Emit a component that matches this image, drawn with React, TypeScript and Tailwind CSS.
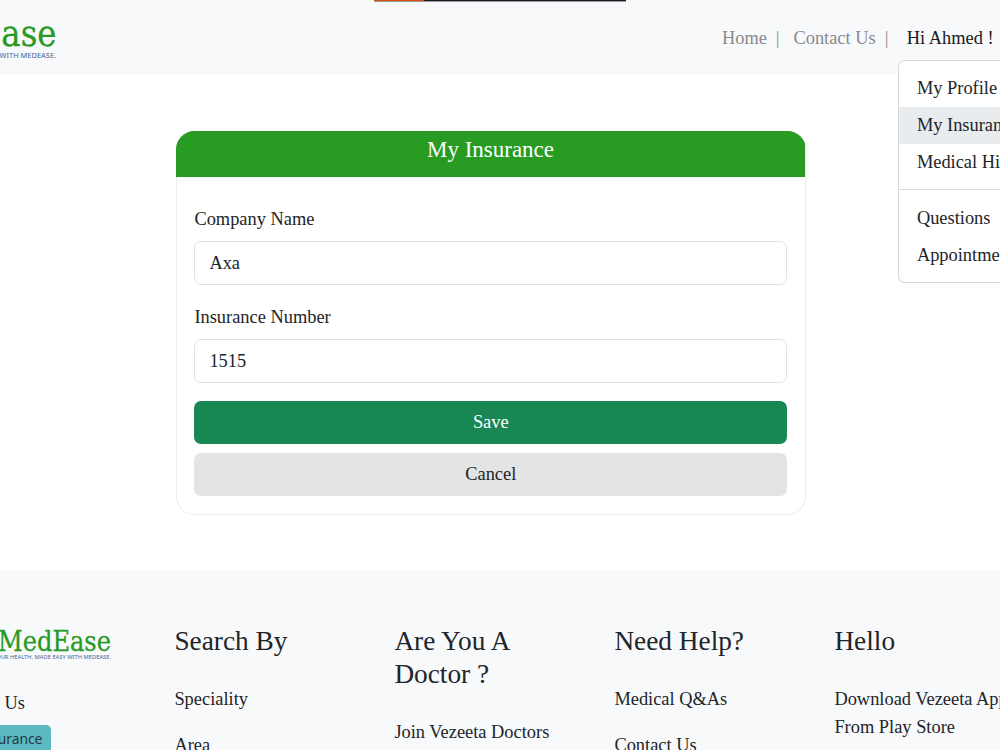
import React from "react";

const linkGroups = [
  { title: "Search By", links: ["Speciality", "Area"] },
  { title: "Are You A Doctor ?", links: ["Join Vezeeta Doctors"] },
  { title: "Need Help?", links: ["Medical Q&As", "Contact Us"] },
];

function Field({ label, value }: { label: string; value: string }) {
  return (
    <label className="mb-[18px] block">
      <span className="mb-[8px] block leading-[28px]">{label}</span>
      <input
        type="text"
        defaultValue={value}
        className="block h-[44px] w-full rounded-[7px] border border-[#dee2e6] bg-white px-[14px] pt-px outline-none"
      />
    </label>
  );
}

function MenuItem({ text, active = false }: { text: string; active?: boolean }) {
  return (
    <a className={`block pb-[3.9px] pl-[17.9px] pt-[5.3px] ${active ? "bg-[#e9ecef]" : ""}`}>{text}</a>
  );
}

function Header() {
  return (
    <header className="relative flex h-[75px] bg-[#f8f9fa]">
      <div className="absolute left-[374px] top-0 flex h-[2px] w-[252px] border-b border-[#9b989c] bg-[#1d1c20]">
        <div className="h-px w-[50px] bg-[#d4500c]" />
      </div>
      <svg width="60" height="75" className="shrink-0" role="img" aria-label="MedEase">
        <text x="56.5" y="46" textAnchor="end" fontFamily="DejaVu Serif, serif" fontSize="37" textLength="152" lengthAdjust="spacingAndGlyphs" fill="#289a24" stroke="#289a24" strokeWidth="0.3">MedEase</text>
        <text x="56" y="57.8" textAnchor="end" fontFamily="Noto Sans, sans-serif" fontSize="7.3" textLength="152" lengthAdjust="spacingAndGlyphs" fill="#42619a">YOUR HEALTH, MADE EASY WITH MEDEASE.</text>
      </svg>
      <nav className="ml-auto flex items-center pr-[6.4px] pt-[2px] text-[#888a8c]">
        <a>Home</a>
        <span className="ml-[9px]">|</span>
        <a className="ml-[13.9px]">Contact Us</a>
        <span className="ml-[9px]">|</span>
        <a className="ml-[18.4px] text-[#17191c]">Hi Ahmed !</a>
      </nav>
      <div className="absolute left-[898px] top-[60.4px] z-10 w-[102px] overflow-hidden whitespace-nowrap rounded-l-[7px] border border-r-0 border-[#d5d7d9] bg-white py-[8.6px] text-[#212529]">
        <MenuItem text="My Profile" />
        <MenuItem text="My Insurance" active />
        <MenuItem text="Medical History" />
        <hr className="mb-[9.6px] mt-[8.8px] border-t border-[#dcdddf]" />
        <MenuItem text="Questions" />
        <MenuItem text="Appointments" />
      </div>
    </header>
  );
}

function InsuranceForm() {
  return (
    <main className="h-[495px] pt-[56px]">
      <section className="ml-[176px] h-[384px] w-[629.5px] overflow-hidden rounded-[18.4px] shadow-[inset_0_0_0_1px_#ececec]">
        <h1 className="mr-[0.5px] h-[46px] bg-[#289b23] pt-[5px] text-center text-[23px] leading-[27.6px] text-white">My Insurance</h1>
        <form className="px-[18.4px] pt-[28px]">
          <Field label="Company Name" value="Axa" />
          <Field label="Insurance Number" value="1515" />
          <button type="button" className="block h-[43px] w-full rounded-[7px] bg-[#198754] text-white">Save</button>
          <button type="button" className="mt-[9.2px] block h-[42.4px] w-full rounded-[7px] bg-[#e4e4e4] pt-px">Cancel</button>
        </form>
      </section>
    </main>
  );
}

function Footer() {
  return (
    <footer className="flex h-[180px] overflow-hidden bg-[#f8f9fa] pt-[54px]">
      <div className="w-[174.4px] shrink-0">
        <svg width="120" height="41" className="block" role="img" aria-label="MedEase">
          <text x="111" y="26.5" textAnchor="end" fontFamily="DejaVu Serif, serif" fontSize="28" textLength="113" lengthAdjust="spacingAndGlyphs" fill="#289a24" stroke="#289a24" strokeWidth="0.3">MedEase</text>
          <text x="111" y="35" textAnchor="end" fontFamily="Noto Sans, sans-serif" fontSize="5.6" textLength="118" lengthAdjust="spacingAndGlyphs" fill="#42619a">YOUR HEALTH, MADE EASY WITH MEDEASE.</text>
        </svg>
        <div className="mt-[25px] flex w-[25px] justify-end whitespace-nowrap">
          <a>About Us</a>
        </div>
        <div className="mt-[7.5px] flex w-[51.4px] justify-end">
          <button type="button" className="h-[40px] shrink-0 whitespace-nowrap rounded-[5px] bg-[#5bb9c1] px-[9px] pb-[14px] font-['Noto_Sans',sans-serif] text-[13.8px] text-[#23383f]">Insurance</button>
        </div>
      </div>
      {linkGroups.map((group) => (
        <div key={group.title} className="w-[220px] shrink-0 pr-[40px] pt-px">
          <h2 className="mb-[27.6px] text-[27.3px] leading-[33px]">{group.title}</h2>
          {group.links.map((link) => (
            <a key={link} className="mb-[18.4px] block">{link}</a>
          ))}
        </div>
      ))}
      <div className="w-[190px] shrink-0 pt-px">
        <h2 className="mb-[27px] text-[27.3px] leading-[33px]">Hello</h2>
        <p className="leading-[28px]">Download Vezeeta App From Play Store</p>
      </div>
    </footer>
  );
}

export default function App() {
  return (
    <div className="h-[750px] w-[1000px] overflow-hidden bg-white font-['Liberation_Serif',serif] text-[18.4px] leading-[27.6px] text-[#212529]">
      <Header />
      <InsuranceForm />
      <Footer />
    </div>
  );
}
